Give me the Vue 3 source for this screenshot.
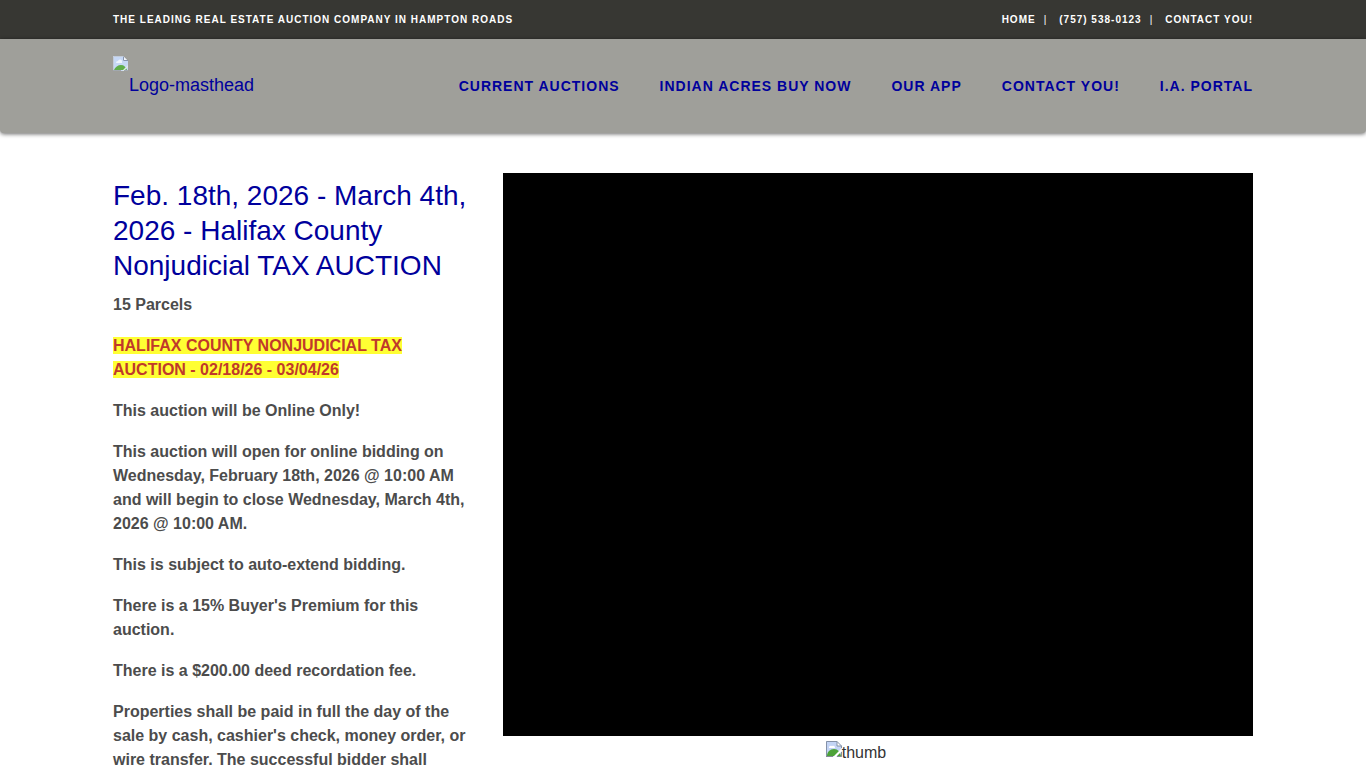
<script setup>
const topLinks = ['HOME', '(757) 538-0123', 'CONTACT YOU!']
const navLinks = ['CURRENT AUCTIONS', 'INDIAN ACRES BUY NOW', 'OUR APP', 'CONTACT YOU!', 'I.A. PORTAL']
const details = [
  'This auction will be Online Only!',
  'This auction will open for online bidding on Wednesday, February 18th, 2026 @ 10:00 AM and will begin to close Wednesday, March 4th, 2026 @ 10:00 AM.',
  'This is subject to auto-extend bidding.',
  "There is a 15% Buyer's Premium for this auction.",
  'There is a $200.00 deed recordation fee.',
  "Properties shall be paid in full the day of the sale by cash, cashier's check, money order, or wire transfer. The successful bidder shall",
]
</script>

<template>
  <div class="page">
    <div class="topbar">
      <div class="container bar">
        <span>THE LEADING REAL ESTATE AUCTION COMPANY IN HAMPTON ROADS</span>
        <ul class="top-links">
          <li v-for="link in topLinks" :key="link"><a href="#">{{ link }}</a></li>
        </ul>
      </div>
    </div>

    <header class="masthead">
      <div class="container bar">
        <a class="logo" href="#">
          <svg class="icon" viewBox="0 0 16 16" aria-hidden="true">
            <path d="M0 0H10L15 5V15H0Z" fill="#c6d8f6" />
            <path d="M3 7a2 2 0 0 1 2-2a2 2 0 0 1 4 1v1Z" fill="#eef4fd" />
            <path d="M1 14C2 11 5 9 8 9C11 9 13 11 14 14Z" fill="#5fae4a" />
            <path d="M15 9V11L11 15H9Z" fill="#dfe8ea" />
            <path d="M10 0V5H15Z" fill="#f4f6fa" />
            <path d="M10.500 0.500V4.500H15" fill="none" stroke="#8795ad" />
            <path d="M0.500 14.500V0.500H10" fill="none" stroke="#c2cbd9" />
            <path d="M0 14.500H8M11 14.500H15" stroke="#a2a8b0" />
          </svg>
          <span class="logo-text">Logo-masthead</span>
        </a>
        <nav class="nav">
          <a v-for="link in navLinks" :key="link" href="#">{{ link }}</a>
        </nav>
      </div>
    </header>

    <main class="container content">
      <section class="info">
        <h1>Feb. 18th, 2026 - March 4th, 2026 - Halifax County Nonjudicial TAX AUCTION</h1>
        <p>15 Parcels</p>
        <p><mark>HALIFAX COUNTY NONJUDICIAL TAX AUCTION - 02/18/26 - 03/04/26</mark></p>
        <p v-for="text in details" :key="text">{{ text }}</p>
      </section>
      <section class="media">
        <div class="player"></div>
        <div class="thumb">
          <svg class="icon" viewBox="0 0 16 16" aria-hidden="true">
            <path d="M0 0H11L16 5V16H0Z" fill="#c3d4f5" />
            <path d="M3 7a2 2 0 0 1 3-2a2 2 0 0 1 3 2Z" fill="#fff" />
            <path d="M1 15C1 11 4 8 8 8C12 8 14 11 15 15Z" fill="#4da338" />
            <path d="M16 7V10L10 16H7Z" fill="#fff" />
            <path d="M11 0V5H16Z" fill="#fff" />
            <path d="M11 0.500V5H15.500V7M0.500 15.500V0.500H11L15.500 5" fill="none" stroke="#8592a8" />
            <path d="M0 15.500H7M11 15.500H15.500V11" fill="none" stroke="#858c96" />
          </svg>
          <span>thumb</span>
        </div>
      </section>
    </main>
  </div>
</template>

<style>
body {
  margin: 0;
  background: #fff;
}
</style>

<style scoped>
.page {
  font-family: "Liberation Sans", Arial, sans-serif;
  font-size: 16px;
  line-height: 24px;
  color: #333;
}
.container {
  box-sizing: border-box;
  max-width: 1170px;
  margin: 0 auto;
  padding: 0 15px;
}
a {
  color: inherit;
  text-decoration: none;
}
.bar {
  display: flex;
  justify-content: space-between;
}
.topbar {
  background: #373733;
  color: #fff;
  font-size: 10px;
  font-weight: bold;
  letter-spacing: 1px;
  line-height: 15px;
  padding: 12px 0;
}
.top-links {
  display: flex;
  margin: 0;
  padding: 0;
  list-style: none;
}
.top-links li + li::before {
  content: "|";
  font-weight: normal;
  margin: 0 12px 0 8px;
}
.masthead {
  background: #9f9f9a;
  color: #00009c;
  border-radius: 0 0 4px 4px;
  box-shadow: 0 1px 4px rgba(0, 0, 0, 0.6);
  padding: 17px 0 24px;
}
.logo {
  display: flex;
  font-size: 18px;
}
.logo-text {
  padding-top: 17px;
  line-height: 24px;
}
.icon {
  display: block;
  flex: none;
  width: 16px;
  height: 16px;
}
.nav {
  display: flex;
  gap: 40px;
  padding-top: 18px;
  font-size: 14px;
  font-weight: bold;
  letter-spacing: 1px;
  line-height: 24px;
}
.masthead .bar {
  min-height: 53px;
}
.content {
  display: grid;
  grid-template-columns: minmax(0, 12fr) minmax(0, 25fr);
  column-gap: 30px;
  padding-top: 40px;
}
.info {
  padding-top: 5px;
  color: #4c4c4c;
}
h1 {
  margin: 0 0 10px;
  color: #00009c;
  font-size: 28px;
  font-weight: normal;
  line-height: 35px;
}
p {
  margin: 0 0 17px;
  font-weight: bold;
}
p:last-child {
  margin: 0;
}
mark {
  background: #ff3;
  color: #c0392b;
}
.player {
  background: #000;
  aspect-ratio: 4 / 3;
}
.thumb {
  display: flex;
  justify-content: center;
  padding: 5px 44px 0 0;
}
</style>
